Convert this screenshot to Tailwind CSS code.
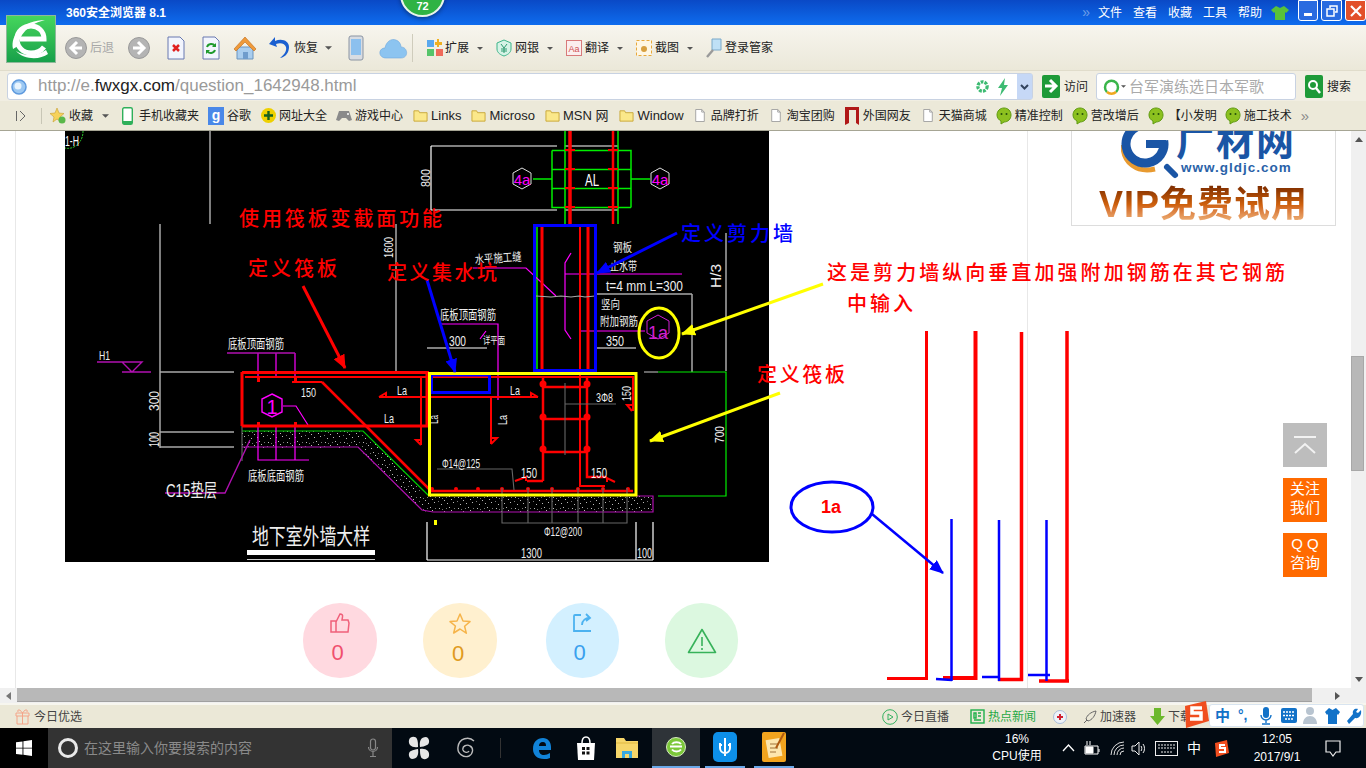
<!DOCTYPE html>
<html lang="zh">
<head>
<meta charset="utf-8">
<title>360安全浏览器</title>
<script src="https://cdn.jsdelivr.net/npm/@tailwindcss/browser@4"></script>
</head>
<body class="w-[1366px] h-[768px] overflow-hidden font-['Liberation_Sans','Noto_Sans_CJK_SC',sans-serif] text-xs">
<svg class="hidden">
  <symbol id="folder" viewBox="0 0 16 16"><path d="M1 3h5l1 2h8v9H1z" fill="#fbe88a" stroke="#c9a83a"/></symbol>
  <symbol id="doc" viewBox="0 0 14 16"><path d="M2 1h7l3 3v11H2z" fill="#fff" stroke="#9a9a9a"/><path d="M9 1v3h3" fill="none" stroke="#9a9a9a"/></symbol>
  <symbol id="bubble" viewBox="0 0 16 18"><path d="M8 1c4 0 7 3 7 7s-3 7-7 7l-3 2 0-3C3 13 1 11 1 8c0-4 3-7 7-7z" fill="#8cc11f" stroke="#5f9a10"/><circle cx="5.5" cy="7" r="1" fill="#24500a"/><circle cx="10.5" cy="7" r="1" fill="#24500a"/></symbol>
  <symbol id="caret" viewBox="0 0 8 4"><path d="M0 0h8L4 4z" fill="#555"/></symbol>
</svg>

<div class="relative flex flex-col h-[768px]">
  <!-- 标题栏 -->
  <div class="h-[25px] flex items-center bg-gradient-to-b from-[#0a49c6] to-[#0f6cee] text-white shrink-0">
    <span class="ml-[66px] font-bold">360安全浏览器 8.1</span>
    <span class="ml-auto text-[#6ea0e8] text-[14px] mr-[8px]">»</span>
    <div class="flex gap-[11px]">
      <span>文件</span><span>查看</span><span>收藏</span><span>工具</span><span>帮助</span>
    </div>
    <svg class="ml-[9px] w-[18px] h-[16px]" viewBox="0 0 18 16"><path d="M5 1l4 2 4-2 5 4-3 3-1-1v8H4V7L3 8 0 5z" fill="#58c23a"/></svg>
    <div class="ml-[9px] flex self-start gap-[3px]">
      <div class="w-[20px] h-[21px] rounded-b-[3px] border border-white bg-[#2a6be0] flex items-end justify-center pb-[4px]"><span class="w-[8px] h-[3px] bg-white"></span></div>
      <div class="w-[21px] h-[21px] rounded-b-[3px] border border-white bg-[#2a6be0] flex items-center justify-center"><svg class="w-[12px] h-[12px]" viewBox="0 0 12 12" fill="none" stroke="#fff" stroke-width="1.5"><path d="M4 3V1h7v6H9M1 4h7v7H1z"/></svg></div>
      <div class="w-[21px] h-[21px] rounded-b-[3px] border border-white bg-[#e2502a] flex items-center justify-center"><svg class="w-[12px] h-[12px]" viewBox="0 0 12 12" stroke="#fff" stroke-width="2.2"><path d="M1 1l10 10M11 1L1 11"/></svg></div>
    </div>
  </div>

  <!-- 工具栏 -->
  <div class="h-[45px] flex items-center pt-[1px] bg-gradient-to-b from-[#f7f5ee] to-[#ebe8d9] text-[#222] shrink-0">
    <svg class="ml-[65px] w-[22px] h-[22px]" viewBox="0 0 22 22"><circle cx="11" cy="11" r="10.5" fill="#b4b4b4" stroke="#999"/><path d="M12 5l-6 6 6 6M6 11h11" fill="none" stroke="#fff" stroke-width="3"/></svg>
    <span class="ml-[3px] text-[#a8a8a8]">后退</span>
    <svg class="ml-[14px] w-[22px] h-[22px]" viewBox="0 0 22 22"><circle cx="11" cy="11" r="10.5" fill="#b4b4b4" stroke="#999"/><path d="M10 5l6 6-6 6M16 11H5" fill="none" stroke="#fff" stroke-width="3"/></svg>
    <svg class="ml-[17px] w-[18px] h-[24px]" viewBox="0 0 18 24"><path d="M1 1h12l4 4v18H1z" fill="#f2f5fd" stroke="#6878b0"/><path d="M6 9l6 6M12 9l-6 6" stroke="#e02020" stroke-width="2.5"/></svg>
    <svg class="ml-[17px] w-[18px] h-[24px]" viewBox="0 0 18 24"><path d="M1 1h12l4 4v18H1z" fill="#f2f5fd" stroke="#6878b0"/><path d="M5 11a4.5 4.5 0 0 1 8-1M13 14a4.5 4.5 0 0 1-8 1" fill="none" stroke="#1f9a2c" stroke-width="2"/><path d="M14 7v4h-4zM4 18v-4h4z" fill="#1f9a2c"/></svg>
    <svg class="ml-[13px] w-[24px] h-[24px]" viewBox="0 0 24 24"><path d="M4 11v12h16V11z" fill="#a9cdee" stroke="#6a94be"/><path d="M1 13L12 1l11 12-2 2-9-9-9 9z" fill="#ef9a3a" stroke="#c06a18" stroke-width=".6"/><path d="M10 23v-7h5v7z" fill="#6f9ccc"/></svg>
    <svg class="ml-[11px] w-[22px] h-[24px]" viewBox="0 0 22 24"><path d="M7 1L1 8l8 3-1-3c5-2 9 0 10 3 1 4-2 8-6 11 6-1 9-6 9-11C21 5 14 2 7 5z" fill="#1a5fd0"/></svg>
    <span class="ml-[4px]">恢复</span>
    <svg class="ml-[7px] w-[7px] h-[4px]"><use href="#caret"/></svg>
    <svg class="ml-[16px] w-[16px] h-[26px]" viewBox="0 0 16 26"><rect x="1" y="1" width="14" height="24" rx="2" fill="#d8dce2" stroke="#8a94a2"/><rect x="3" y="4" width="10" height="16" fill="#8cc0ee"/></svg>
    <svg class="ml-[15px] w-[29px] h-[22px]" viewBox="0 0 29 22"><path d="M7 21c-8 0-8-10-1-10 1-6 6-10 11-8 3 1 5 4 5 7 7 0 8 11 0 11z" fill="#8cc4f0" stroke="#6ea8de" stroke-width=".6"/></svg>
    <span class="ml-[4px] w-px h-[28px] bg-[#cfccbc]"></span>
    <svg class="ml-[14px] w-[16px] h-[18px]" viewBox="0 0 16 18"><rect x="0" y="1" width="7" height="7" fill="#5aa8ee"/><rect x="0" y="10" width="7" height="7" fill="#56c46a"/><rect x="9" y="10" width="7" height="7" fill="#f06a5a"/><path d="M12 0v3h3v3h-3v2h-2V6H8V3h2V0z" fill="#f0b020"/></svg>
    <span class="ml-[2px]">扩展</span>
    <svg class="ml-[8px] w-[6px] h-[3px]"><use href="#caret"/></svg>
    <svg class="ml-[13px] w-[16px] h-[18px]" viewBox="0 0 16 18"><path d="M8 1l7 3v6c0 4-4 6-7 7-3-1-7-3-7-7V4z" fill="#d6f3e6" stroke="#3db58a"/><path d="M5 5l3 4 3-4M8 9v5M5 10h6M5 12h6" fill="none" stroke="#2f9a70"/></svg>
    <span class="ml-[3px]">网银</span>
    <svg class="ml-[8px] w-[6px] h-[3px]"><use href="#caret"/></svg>
    <svg class="ml-[13px] w-[16px] h-[18px]" viewBox="0 0 16 18"><rect x=".5" y="1.5" width="15" height="15" fill="#fbeeee" stroke="#d87a7a"/><text x="8" y="13" text-anchor="middle" font-size="9" fill="#d05050">Aa</text></svg>
    <span class="ml-[3px]">翻译</span>
    <svg class="ml-[8px] w-[6px] h-[3px]"><use href="#caret"/></svg>
    <svg class="ml-[13px] w-[16px] h-[18px]" viewBox="0 0 16 18"><rect x=".5" y="1.5" width="15" height="15" fill="#fff7e4" stroke="#e8a83a" stroke-dasharray="3 2"/><circle cx="8" cy="10" r="3" fill="#d8a040"/></svg>
    <span class="ml-[3px]">截图</span>
    <svg class="ml-[8px] w-[6px] h-[3px]"><use href="#caret"/></svg>
    <svg class="ml-[13px] w-[16px] h-[20px]" viewBox="0 0 16 20"><path d="M6 1h9v11H6z" fill="#bfe0f6" stroke="#7aa8c8"/><path d="M7 12l-6 7" stroke="#9a9a9a" stroke-width="2.4"/></svg>
    <span class="ml-[3px]">登录管家</span>
  </div>

  <!-- 地址栏 -->
  <div class="h-[31px] flex items-center pt-[1px] bg-[#f1eee2] border-t border-[#e0dccb] shrink-0">
    <div class="ml-[7px] w-[1026px] h-[27px] bg-white border border-[#c8d2e2] rounded-[3px] flex items-center">
      <svg class="ml-[3px] w-[16px] h-[16px]" viewBox="0 0 16 16"><circle cx="8" cy="8" r="7" fill="#9cc8f2" stroke="#5f9ade" stroke-width="1.5"/><circle cx="7" cy="7" r="3.5" fill="#e8f4fe"/></svg>
      <span class="ml-[11px] text-[17px] text-[#9a9a9a]">http://e.<span class="text-[#222]">fwxgx.com</span>/question_1642948.html</span>
      <svg class="ml-auto w-[13px] h-[13px]" viewBox="0 0 14 14"><circle cx="7" cy="7" r="5" fill="none" stroke="#3dbb72" stroke-width="3.5" stroke-dasharray="3 1.2"/></svg>
      <svg class="ml-[8px] w-[12px] h-[18px]" viewBox="0 0 12 18"><path d="M8 0L1 10h4l-2 8 8-11H7z" fill="#3dbb72"/></svg>
      <div class="ml-[8px] w-[15px] h-[25px] bg-[#c6d8f6] flex items-center justify-center"><svg class="w-[9px] h-[6px]" viewBox="0 0 9 6" fill="none" stroke="#33445e" stroke-width="2"><path d="M1 1l3.5 3.5L8 1"/></svg></div>
    </div>
    <svg class="ml-[9px] w-[18px] h-[23px]" viewBox="0 0 18 23"><rect width="18" height="23" rx="2" fill="#1e9a38"/><path d="M3 11h9M8 5l6 6-6 6" fill="none" stroke="#fff" stroke-width="3"/></svg>
    <span class="ml-[4px] text-[#222]">访问</span>
    <div class="ml-[8px] w-[200px] h-[27px] bg-white border border-[#c8d2e2] rounded-[3px] flex items-center">
      <svg class="ml-[6px] w-[18px] h-[18px]" viewBox="0 0 18 18" fill="none" stroke-width="2.5"><path d="M4 14A6.5 6.5 0 1 1 13 14" stroke="#3ab54a"/><path d="M4 14a6.5 6.5 0 0 0 9 0" stroke="#f0a81e"/></svg>
      <svg class="w-[5px] h-[3px]"><use href="#caret"/></svg>
      <span class="ml-[3px] text-[15px] text-[#aaa]">台军演练选日本军歌</span>
    </div>
    <svg class="ml-[9px] w-[18px] h-[23px]" viewBox="0 0 18 23"><rect width="18" height="23" rx="2" fill="#1e9a38"/><circle cx="8" cy="10" r="4" fill="none" stroke="#fff" stroke-width="2"/><path d="M11 13l4 5" stroke="#fff" stroke-width="2.4"/></svg>
    <span class="ml-[4px] text-[#222]">搜索</span>
  </div>

  <!-- 收藏栏 -->
  <div class="h-[29px] flex items-center bg-[#ece9d9] text-[#222] shrink-0">
    <svg class="ml-[15px] w-[12px] h-[12px]" viewBox="0 0 12 12" fill="none" stroke="#666"><path d="M1.5 1v10M5 1l5 5-5 5"/></svg>
    <span class="ml-[14px] w-px h-[16px] bg-[#c8c6b6]"></span>
    <svg class="ml-[8px] w-[16px] h-[18px]" viewBox="0 0 16 18"><path d="M7 1l2 5 5 .5-4 3.5 1 5-4-3-4 3 1-5-4-3.500 5-.5z" fill="#f6d25a" stroke="#c8a030" stroke-width=".6"/><circle cx="12" cy="13" r="3.500" fill="#5ab84a"/></svg>
    <span class="ml-[3px]">收藏</span>
    <svg class="ml-[9px] w-[7px] h-[4px]"><use href="#caret"/></svg>
    <svg class="ml-[13px] w-[11px] h-[18px]" viewBox="0 0 11 18"><rect x=".7" y=".7" width="9.600" height="16.600" rx="1.500" fill="#fff" stroke="#2fb05a" stroke-width="1.400"/><path d="M1 14h9v3H1z" fill="#2fb05a"/></svg>
    <span class="ml-[6px]">手机收藏夹</span>
    <div class="ml-[9px] w-[16px] h-[18px] bg-[#4a88e8] text-white text-[14px] font-bold flex items-center justify-center">g</div>
    <span class="ml-[3px]">谷歌</span>
    <svg class="ml-[10px] w-[15px] h-[17px]" viewBox="0 0 15 17"><circle cx="7.500" cy="8.500" r="7.500" fill="#eed000"/><path d="M7.500 4v9M3 8.500h9" stroke="#156020" stroke-width="2.400"/></svg>
    <span class="ml-[3px]">网址大全</span>
    <svg class="ml-[9px] w-[16px] h-[13px]" viewBox="0 0 16 13"><path d="M3 2h10l3 9-3 1-3-3H6l-3 3-3-1z" fill="#8a8a8a"/><circle cx="12" cy="5" r="1" fill="#fff"/></svg>
    <span class="ml-[3px]">游戏中心</span>
    <svg class="ml-[10px] w-[15px] h-[15px]"><use href="#folder"/></svg>
    <span class="ml-[3px] text-[13px]">Links</span>
    <svg class="ml-[10px] w-[15px] h-[15px]"><use href="#folder"/></svg>
    <span class="ml-[3px] text-[13px]">Microso</span>
    <svg class="ml-[10px] w-[15px] h-[15px]"><use href="#folder"/></svg>
    <span class="ml-[3px] text-[13px]">MSN 网</span>
    <svg class="ml-[11px] w-[15px] h-[15px]"><use href="#folder"/></svg>
    <span class="ml-[3px] text-[13px]">Window</span>
    <svg class="ml-[10px] w-[12px] h-[15px]"><use href="#doc"/></svg>
    <span class="ml-[5px]">品牌打折</span>
    <svg class="ml-[11px] w-[12px] h-[15px]"><use href="#doc"/></svg>
    <span class="ml-[5px]">淘宝团购</span>
    <svg class="ml-[10px] w-[14px] h-[18px]" viewBox="0 0 14 18"><path d="M0 0h14v18l-3-2V3H4v13l-4 2z" fill="#b01818"/></svg>
    <span class="ml-[4px]">外国网友</span>
    <svg class="ml-[11px] w-[12px] h-[15px]"><use href="#doc"/></svg>
    <span class="ml-[5px]">天猫商城</span>
    <svg class="ml-[9px] w-[16px] h-[18px]"><use href="#bubble"/></svg>
    <span class="ml-[3px]">精准控制</span>
    <svg class="ml-[9px] w-[16px] h-[18px]"><use href="#bubble"/></svg>
    <span class="ml-[3px]">营改增后</span>
    <svg class="ml-[9px] w-[16px] h-[18px]"><use href="#bubble"/></svg>
    <span class="ml-[5px]">【小发明</span>
    <svg class="ml-[8px] w-[16px] h-[18px]"><use href="#bubble"/></svg>
    <span class="ml-[3px]">施工技术</span>
    <span class="ml-[9px] text-[#8a8a8a] text-[15px]">»</span>
  </div>
  <div class="h-px bg-[#a6a594] shrink-0"></div>

  <!-- 页面内容 -->
  <div class="h-[557px] flex shrink-0">
    <div class="relative flex-1 bg-white overflow-hidden flex">
      <div class="w-[15px] shrink-0"></div>
      <div class="w-[1013px] border-x border-[#e8e8e8] shrink-0">
        <div class="ml-[49px] w-[704px] h-[431px] bg-black"></div>
        <div class="ml-[287px] mt-[41px] flex text-[22px]">
          <div class="w-[74px] h-[75px] rounded-full bg-[#ffd9e0] flex flex-col items-center pt-[10px] text-[#f0506e]">
            <svg class="w-[20px] h-[20px]" viewBox="0 0 20 20" fill="none" stroke="#f0607a" stroke-width="1.500"><path d="M1 8h5v11H1zM6 9l4-8c2 0 3 1 2.500 3L12 7h6l1 3-1 9H6"/></svg>
            <span class="mr-[5px] leading-[40px]">0</span>
          </div>
          <div class="ml-[46px] w-[74px] h-[75px] rounded-full bg-[#fff0cf] flex flex-col items-center pt-[10px] text-[#e09a20]">
            <svg class="w-[22px] h-[21px]" viewBox="0 0 22 21" fill="none" stroke="#f6b44a" stroke-width="1.500"><path d="M11 1l3 7 7 .6-5.400 4.600 1.700 7L11 16l-6.300 4 1.700-7L1 8.600 8 8z" stroke-linejoin="round"/></svg>
            <span class="mr-[4px] leading-[39px]">0</span>
          </div>
          <div class="ml-[49px] w-[73px] h-[75px] rounded-full bg-[#d3f0ff] flex flex-col items-center pt-[10px] text-[#39a0ee]">
            <svg class="w-[19px] h-[20px]" viewBox="0 0 19 20" fill="none" stroke="#4cb2f0" stroke-width="1.800"><path d="M8 2H2a1 1 0 0 0-1 1v15h17M9 12c0-5 4-7 7-7M13 1l4 4-4 3"/></svg>
            <span class="mr-[6px] leading-[40px]">0</span>
          </div>
          <div class="ml-[46px] w-[73px] h-[75px] rounded-full bg-[#dcf8e0] flex items-center justify-center">
            <svg class="w-[30px] h-[26px]" viewBox="0 0 30 26" fill="none" stroke="#37b25a" stroke-width="1.600"><path d="M15 1.500L1.500 24.500h27zM15 9v9" stroke-linejoin="round"/><path d="M15 20v2"/></svg>
          </div>
        </div>
      </div>
      <div class="flex-1 min-w-0">
        <div class="ml-[43px] w-[265px] h-[95px] border-x border-b border-[#dddddd] overflow-hidden">
          <div class="h-[54px] flex pl-[49px]">
            <svg class="w-[60px] h-[50px] shrink-0" viewBox="0 0 60 50" fill="none"><path d="M2 14c0 18 14 28 32 24" stroke="#e89a30" stroke-width="5"/><circle cx="24" cy="13" r="19" stroke="#1a55a5" stroke-width="9" stroke-dasharray="92 30" transform="rotate(-10 24 13)"/><path d="M25 13h20" stroke="#1a55a5" stroke-width="8"/><path d="M46 36l8 8" stroke="#1a55a5" stroke-width="6" stroke-linecap="round"/></svg>
            <div class="ml-[-5px] flex flex-col">
              <span class="mt-[-9px] h-[37px] text-[38px] leading-[41px] font-bold text-[#1a55a5] tracking-[2px] whitespace-nowrap">广材网</span>
              <span class="ml-[5px] text-[13.500px] leading-[18px] font-bold text-[#2a62a8] tracking-[1px]">www.gldjc.com</span>
            </div>
          </div>
          <div class="text-center text-[36px] leading-[40px] font-bold tracking-[1px] bg-gradient-to-b from-[#7a2a00] via-[#d0620e] to-[#f2c088] bg-clip-text text-transparent whitespace-nowrap">VIP免费试用</div>
        </div>
      </div>

      <!-- 图纸标注层 -->
      <svg class="absolute inset-0 pointer-events-none" width="1351" height="557" viewBox="0 131 1351 557">
        <defs>
          <marker id="hr" markerUnits="userSpaceOnUse" markerWidth="14" markerHeight="12" refX="13" refY="6" orient="auto"><path d="M0 0l14 6-14 6z" fill="#f00"/></marker>
          <marker id="hb" markerUnits="userSpaceOnUse" markerWidth="14" markerHeight="12" refX="13" refY="6" orient="auto"><path d="M0 0l14 6-14 6z" fill="#00f"/></marker>
          <marker id="hy" markerUnits="userSpaceOnUse" markerWidth="14" markerHeight="12" refX="13" refY="6" orient="auto"><path d="M0 0l14 6-14 6z" fill="#ff0"/></marker>
          <pattern id="con" width="19" height="11" patternUnits="userSpaceOnUse"><rect width="19" height="11" fill="#000"/><path d="M2 2h1v1H2zM7 5h1v1H7zM12 1h1v1h-1zM16 7h1v1h-1zM4 9h1v1H4zM10 8h1v1h-1zM14 4h1v1h-1z" fill="#bbb"/><path d="M5 3h1v1H5zM9 2h1v1H9zM1 6h1v1H1zM17 2h1v1h-1z" fill="#777"/></pattern>
        </defs>

        <!-- 灰色尺寸线 -->
        <g fill="none" stroke="#a8a8a8" stroke-width="1.500">
          <path d="M210 131v93M160 224v224M396 224v148M160 372h74M160 432h74M160 447h74M726 233v138M692 294v78M596 294h96"/>
        </g>
        <path d="M83 131a15 17 0 0 1-18 17" fill="none" stroke="#2fd02f" stroke-dasharray="2 1"/>
        <text x="65" y="146" fill="#fff" font-size="15" textLength="14" lengthAdjust="spacingAndGlyphs">1-H</text>
        <g fill="none" stroke="#fff" stroke-width="1.200">
          <path d="M431 146h126M431 210h126M431 146v64M565 146h53M565 210h53M427 348h60M596 348h40M427 522v38M636 522v38M653 522v38M427 560h226"/>
        </g>

        <!-- 上部柱 -->
        <g fill="none" stroke="#0e0" stroke-width="1.500">
          <path d="M552 150.500h79v57M552 150.500v57h79M552 169.500h79M552 188.500h79M565 131v93M618 131v93M533 179h19M631 179h19M537 226v144"/>
        </g>
        <path d="M570 131v93" stroke="#f00" stroke-width="3.500"/>
        <path d="M613 131v93" stroke="#f00" stroke-width="2.500"/>
        <g stroke="#f00" stroke-width="2"><path d="M565 150h10M565 169h10M565 188h10M565 207h10M608 150h10M608 169h10M608 188h10M608 207h10"/></g>
        <text x="592" y="186" fill="#fff" font-size="16" text-anchor="middle" textLength="14" lengthAdjust="spacingAndGlyphs">AL</text>
        <g fill="none" stroke="#ddd" stroke-width="1"><path d="M522 168l9 5v11l-9 5-9-5v-11zM660 168l9 5v11l-9 5-9-5v-11z"/></g>
        <text x="522" y="185" fill="#f0f" font-size="15" text-anchor="middle">4a</text>
        <text x="660" y="185" fill="#f0f" font-size="15" text-anchor="middle">4a</text>

        <!-- 混凝土垫层 -->
        <path d="M242 431h121l57 57v8h233v16H433l-11-1-64-63H242z" fill="url(#con)"/>
        <path d="M242 431h121l66 65" fill="none" stroke="#0c0" stroke-width="1.200"/>
        <path d="M242 447h116l64 63 11 2h220v-16h-17" fill="none" stroke="#b010b0" stroke-width="1.200"/>
        <path d="M242 372v89" stroke="#777"/>

        <!-- 品红引线 -->
        <g fill="none" stroke="#f0f" stroke-width="1.200">
          <path d="M473 268h53l30 28M571 253l-6 10v67l6 9M565 274h117M580 331h65M480 339l6-8M440 324h58v76M258 353v27M276 353v25M295 353v27M258 425v35h51M276 425v35M295 425v35M283 406h13l12 19"/>
          <path d="M272 394l10 5v13l-10 5-10-5v-13z" stroke-width="1.400"/>
        </g>
        <path d="M647 321l11-6 11 6v12l-11 6-11-6z" fill="none" stroke="#d020d0"/>
        <path d="M227 353h68M97 362h45l-10 10-10-10M122 372h29M165 493h60l25-53" fill="none" stroke="#b010b0" stroke-width="1.400"/>
        <text x="272" y="414" fill="#f0f" font-size="20" text-anchor="middle">1</text>
        <text x="658" y="339" fill="#d020d0" font-size="18" text-anchor="middle" textLength="20" lengthAdjust="spacingAndGlyphs">1a</text>

        <!-- 钢筋红线 -->
        <g fill="none" stroke="#f00" stroke-width="3">
          <path d="M242 372.500h187M242 426h187M242 372v54M427 372v55M542 226v143M588 226v143"/>
          <path d="M322 382l98 98 9 9" stroke-width="2.500"/>
          <path d="M543 377v104M587 377v100h20M543 387h44M543 419h44M543 452h44M543 481h-16" stroke-width="2.500"/>
          <path d="M430 491h203" stroke-width="2.500"/>
        </g>
        <path d="M245 377h184M322 382h-22" fill="none" stroke="#f00" stroke-width="2"/>
        <path d="M580 226v143M580 370v116h25" fill="none" stroke="#f00" stroke-width="2"/>
        <path d="M430 377h203v34M430 397h108M491 397v47M429 397h-50M421 377v68M292 382h10M515 481l11-4v4M615 482l-8-4v4M538 397l-7-4v4M379 397l7-4v4M632 411l-5-6h5M491 444l6-6h-6M421 445l-5-5h5" fill="none" stroke="#f00" stroke-width="2"/>
        <g fill="#f00">
          <circle cx="543" cy="384" r="3.500"/><circle cx="587" cy="384" r="3.500"/><circle cx="543" cy="417" r="3.500"/><circle cx="587" cy="417" r="3.500"/><circle cx="543" cy="449" r="3.500"/><circle cx="587" cy="449" r="3.500"/>
          <circle cx="432" cy="489" r="2"/><circle cx="456" cy="489" r="2"/><circle cx="478" cy="489" r="2"/><circle cx="502" cy="489" r="2"/><circle cx="528" cy="489" r="2"/><circle cx="552" cy="489" r="2"/><circle cx="578" cy="489" r="2"/><circle cx="603" cy="489" r="2"/><circle cx="628" cy="489" r="2"/>
          <rect x="257" y="378" width="3" height="4"/><rect x="294" y="378" width="3" height="4"/><rect x="257" y="422" width="3" height="4"/><rect x="294" y="422" width="3" height="4"/>
        </g>

        <!-- 灰线 -->
        <g fill="none" stroke="#666" stroke-width="1.100">
          <path d="M565 383v72M565 404h51M437 469h75l2 21M502 488v35h125v-35M528 488v35M552 488v35M578 488v35M603 488v35"/>
        </g>
        <path d="M536 296l15 1 10-1 10 1 8-1 6 1 10-1" fill="none" stroke="#aaa" stroke-width="1.200"/>
        <path d="M644 372h14" stroke="#888" stroke-width="1.500"/>
        <path d="M658 372h68v124h-68" fill="none" stroke="#0e0" stroke-width="1.200"/>

        <!-- CAD 白字 -->
        <g fill="#eee" font-size="14">
          <text x="228" y="348" textLength="56" lengthAdjust="spacingAndGlyphs" font-size="13">底板顶面钢筋</text>
          <text x="440" y="319" textLength="56" lengthAdjust="spacingAndGlyphs" font-size="13">底板顶面钢筋</text>
          <text x="248" y="480" textLength="56" lengthAdjust="spacingAndGlyphs" font-size="13">底板底面钢筋</text>
          <text x="166" y="497" textLength="51" lengthAdjust="spacingAndGlyphs" font-size="18">C15垫层</text>
          <text x="252" y="544" textLength="118" lengthAdjust="spacingAndGlyphs" font-size="22">地下室外墙大样</text>
          <text x="475" y="264" textLength="47" lengthAdjust="spacingAndGlyphs" font-size="12" transform="rotate(-4 475 264)">水平施工缝</text>
          <text x="613" y="252" textLength="19" lengthAdjust="spacingAndGlyphs" font-size="12">钢板</text>
          <text x="610" y="271" textLength="27" lengthAdjust="spacingAndGlyphs" font-size="12">止水带</text>
          <text x="606" y="291" textLength="77" lengthAdjust="spacingAndGlyphs" font-size="14">t=4 mm L=300</text>
          <text x="601" y="309" textLength="19" lengthAdjust="spacingAndGlyphs" font-size="12">竖向</text>
          <text x="600" y="326" textLength="38" lengthAdjust="spacingAndGlyphs" font-size="12">附加钢筋</text>
          <text x="449" y="346" textLength="17" lengthAdjust="spacingAndGlyphs" font-size="14">300</text>
          <text x="606" y="346" textLength="18" lengthAdjust="spacingAndGlyphs" font-size="14">350</text>
          <text x="505" y="344" textLength="22" lengthAdjust="spacingAndGlyphs" font-size="10" text-anchor="end">详平面</text>
          <text x="99" y="360" textLength="11" lengthAdjust="spacingAndGlyphs" font-size="13">H1</text>
          <text x="301" y="397" textLength="15" lengthAdjust="spacingAndGlyphs" font-size="13">150</text>
          <text x="397" y="395" textLength="10" lengthAdjust="spacingAndGlyphs" font-size="13">La</text>
          <text x="384" y="423" textLength="10" lengthAdjust="spacingAndGlyphs" font-size="13">La</text>
          <text x="510" y="395" textLength="10" lengthAdjust="spacingAndGlyphs" font-size="13">La</text>
          <text x="596" y="402" textLength="17" lengthAdjust="spacingAndGlyphs" font-size="13">3Φ8</text>
          <text x="521" y="478" textLength="16" lengthAdjust="spacingAndGlyphs" font-size="14">150</text>
          <text x="591" y="478" textLength="16" lengthAdjust="spacingAndGlyphs" font-size="14">150</text>
          <text x="442" y="468" textLength="38" lengthAdjust="spacingAndGlyphs" font-size="13">Φ14@125</text>
          <text x="544" y="536" textLength="38" lengthAdjust="spacingAndGlyphs" font-size="13">Φ12@200</text>
          <text x="521" y="558" textLength="21" lengthAdjust="spacingAndGlyphs" font-size="15">1300</text>
          <text x="637" y="558" textLength="15" lengthAdjust="spacingAndGlyphs" font-size="14">100</text>
          <text transform="translate(393 258) rotate(-90)" textLength="21" lengthAdjust="spacingAndGlyphs" font-size="12">1600</text>
          <text transform="translate(430 187) rotate(-90)" textLength="18" lengthAdjust="spacingAndGlyphs" font-size="12">800</text>
          <text transform="translate(721 288) rotate(-90)" textLength="24" lengthAdjust="spacingAndGlyphs" font-size="15">H/3</text>
          <text transform="translate(159 411) rotate(-90)" textLength="20" lengthAdjust="spacingAndGlyphs" font-size="14">300</text>
          <text transform="translate(159 447) rotate(-90)" textLength="15" lengthAdjust="spacingAndGlyphs" font-size="14">100</text>
          <text transform="translate(631 401) rotate(-90)" textLength="15" lengthAdjust="spacingAndGlyphs" font-size="13">150</text>
          <text transform="translate(507 425) rotate(-90)" textLength="10" lengthAdjust="spacingAndGlyphs" font-size="13">La</text>
          <text transform="translate(438 424) rotate(-90)" textLength="9" lengthAdjust="spacingAndGlyphs" font-size="13">La</text>
          <text transform="translate(724 443) rotate(-90)" textLength="17" lengthAdjust="spacingAndGlyphs" font-size="13">700</text>
        </g>
        <path d="M247 550h128v5H247z" fill="#fff"/>
        <path d="M247 559.500h128" stroke="#ccc"/>
        <rect x="434" y="520" width="3" height="5" fill="#ff0"/>

        <!-- 标注框和箭头 -->
        <rect x="534.500" y="225.500" width="61" height="145" fill="none" stroke="#00f" stroke-width="3"/>
        <rect x="431.500" y="375" width="58" height="17.500" fill="none" stroke="#00f" stroke-width="3"/>
        <rect x="429.500" y="373.500" width="206.500" height="121.500" fill="none" stroke="#ff0" stroke-width="3"/>
        <ellipse cx="659" cy="333" rx="20" ry="25" fill="none" stroke="#ff0" stroke-width="3"/>
        <path d="M303 286l42 82" stroke="#f00" stroke-width="3" marker-end="url(#hr)"/>
        <path d="M427 280l28 92" stroke="#00f" stroke-width="3" marker-end="url(#hb)"/>
        <path d="M677 233l-80 40" stroke="#00f" stroke-width="3" marker-end="url(#hb)"/>
        <path d="M823 284l-141 50" stroke="#ff0" stroke-width="3" marker-end="url(#hy)"/>
        <path d="M780 393l-130 48" stroke="#ff0" stroke-width="3" marker-end="url(#hy)"/>

        <g font-size="20" font-weight="500" fill="#f00">
          <text x="239" y="226" textLength="203">使用筏板变截面功能</text>
          <text x="248" y="276" textLength="89">定义筏板</text>
          <text x="387" y="280" textLength="110">定义集水坑</text>
          <text x="757" y="382" textLength="88">定义筏板</text>
          <text x="827" y="280" textLength="458">这是剪力墙纵向垂直加强附加钢筋在其它钢筋</text>
          <text x="847" y="311" textLength="66">中输入</text>
        </g>
        <text x="681" y="241" font-size="20" font-weight="500" fill="#00f" textLength="112">定义剪力墙</text>

        <!-- 右侧手绘钢筋 -->
        <g fill="none" stroke="#f00">
          <path d="M926.500 331v349M887 678.500h41" stroke-width="3"/>
          <path d="M975.500 331v349M943 678h34" stroke-width="4"/>
          <path d="M1021.500 332v349M998 679.500h25" stroke-width="3.500"/>
          <path d="M1067 331v351M1039 681h30" stroke-width="3.500"/>
        </g>
        <g fill="none" stroke="#00f" stroke-width="2.500">
          <path d="M951.500 519v162M936 679l16 1M999 520v161M982 677h17M1046.500 520v161M1028 675h22"/>
          <ellipse cx="832" cy="507" rx="41" ry="25" stroke-width="3"/>
        </g>
        <path d="M872 514l71 59" stroke="#00f" stroke-width="2.500" marker-end="url(#hb)"/>
        <text x="831" y="513" font-size="18" font-weight="700" fill="#f00" text-anchor="middle">1a</text>
      </svg>

      <!-- 悬浮按钮 -->
      <div class="absolute left-[1283px] top-[292px] w-[44px] flex flex-col gap-[11px] text-white text-[15px] leading-[19px] text-center">
        <div class="h-[44px] bg-[#bdbdbd] flex items-center justify-center"><svg class="w-[24px] h-[18px]" viewBox="0 0 24 18" fill="none" stroke="#f2f2f2" stroke-width="2"><path d="M1 1h22M2 17l10-9 10 9"/></svg></div>
        <div class="h-[44px] bg-[#ff6a00] pt-[1px]">关注<br>我们</div>
        <div class="h-[44px] bg-[#ff6a00] pt-[1px]">Q Q<br>咨询</div>
      </div>
    </div>
    <!-- 竖向滚动条 -->
    <div class="w-[15px] bg-[#f0f0f0] flex flex-col items-center relative">
      <div class="mt-[6px] w-0 h-0 border-x-[4px] border-x-transparent border-b-[5px] border-b-[#555]"></div>
      <div class="absolute left-0 top-[225px] w-[13px] h-[115px] bg-[#b8b8b8] border border-[#a8a8a8]"></div>
      <div class="mt-auto mb-[6px] w-0 h-0 border-x-[4px] border-x-transparent border-t-[5px] border-t-[#555]"></div>
    </div>
  </div>

  <!-- 横向滚动条 -->
  <div class="h-[15px] bg-[#f0f0f0] flex items-center shrink-0">
    <div class="ml-[6px] w-0 h-0 border-y-[4px] border-y-transparent border-r-[5px] border-r-[#777]"></div>
    <div class="ml-[6px] w-[1295px] h-[14px] self-start bg-[#b8b8b8] border-b border-[#a0a0a0]"></div>
    <div class="ml-[23px] w-0 h-0 border-y-[4px] border-y-transparent border-l-[5px] border-l-[#555]"></div>
  </div>

  <!-- 状态栏 -->
  <div class="h-[25px] flex items-center bg-[#ebe8d7] border-t-2 border-[#f7f6ef] text-[#444] shrink-0">
    <svg class="ml-[15px] w-[15px] h-[17px]" viewBox="0 0 15 17" fill="none" stroke="#f4a488"><path d="M1 5h13v3H1zM2 8v8h11V8M7.500 5v11M7.500 5C5 1 2 1 3 4M7.500 5c2.500-4 5.500-4 4.500-1"/></svg>
    <span class="ml-[4px]">今日优选</span>
    <svg class="ml-[800px] w-[16px] h-[16px]" viewBox="0 0 16 16" fill="none" stroke="#34b060"><circle cx="8" cy="8" r="7.300"/><path d="M6 5l5 3-5 3z"/></svg>
    <span class="ml-[3px]">今日直播</span>
    <svg class="ml-[21px] w-[15px] h-[15px]" viewBox="0 0 15 15" fill="none" stroke="#1fb04a" stroke-width="1.400"><rect x="1" y="1" width="13" height="13"/><path d="M4 4h2v5H4zM8 4h3M8 7h3M4 11h7"/></svg>
    <span class="ml-[3px] text-[#1fa844]">热点新闻</span>
    <svg class="ml-[17px] w-[14px] h-[14px]" viewBox="0 0 14 14"><circle cx="7" cy="7" r="6.500" fill="#eef2f8" stroke="#a8bcd8"/><path d="M7 4v6M4 7h6" stroke="#d02030" stroke-width="2"/></svg>
    <svg class="ml-[16px] w-[14px] h-[14px]" viewBox="0 0 14 14" fill="none" stroke="#666"><path d="M3 9c1-4 5-7 10-8-1 5-4 9-8 10zM1 13l3-3"/></svg>
    <span class="ml-[3px]">加速器</span>
    <svg class="ml-[14px] w-[15px] h-[18px]" viewBox="0 0 15 18"><path d="M4 0h7v8h4l-7.500 9L0 8h4z" fill="#6cb82c"/></svg>
    <span class="ml-[3px]">下载</span>
  </div>

  <!-- 任务栏 -->
  <div class="h-[40px] flex items-center bg-[#020a12] text-white shrink-0 relative">
    <div class="w-[48px] h-full bg-black flex items-center justify-center"><svg class="w-[16px] h-[16px]" viewBox="0 0 16 16" fill="#fff"><path d="M0 2.300l6.500-.9v6.300H0zM7.400 1.300L16 0v7.700H7.400zM0 8.500h6.500v6.300L0 13.900zM7.400 8.500H16V16l-8.600-1.200z"/></svg></div>
    <div class="w-[344px] h-full bg-[#333] flex items-center text-[14px] text-[#8a8a8a]">
      <span class="ml-[10px] w-[20px] h-[20px] rounded-full border-[3px] border-[#e8e8e8]"></span>
      <span class="ml-[6px]">在这里输入你要搜索的内容</span>
      <svg class="ml-auto mr-[14px] w-[10px] h-[20px]" viewBox="0 0 10 20" fill="none" stroke="#888" stroke-width="1.200"><rect x="2.500" y="1" width="5" height="11" rx="2.500"/><path d="M.5 9a4.500 4.500 0 0 0 9 0M5 14v4M2 18.500h6"/></svg>
    </div>
    <svg class="ml-[16px] w-[22px] h-[24px]" viewBox="0 0 22 24" fill="#e6e6e6"><path d="M10 11C4 12 0 9 1 4c1-4 7-4 8-1 1 2 1 5 1 8zM12 11c-1-6 1-10 6-10 4 1 4 7 1 8-2 1-5 2-7 2zM12 13c6-1 10 2 9 7-1 4-7 4-8 1-1-2-1-5-1-8zM10 13c1 6-1 10-6 10-4-1-4-7-1-8 2-1 5-2 7-2z"/></svg>
    <svg class="ml-[26px] w-[20px] h-[22px]" viewBox="0 0 20 22" fill="none" stroke="#bbb" stroke-width="1.400"><path d="M18 4C13-1 3 1 2 10c-1 7 6 11 11 9 4-2 5-8 1-10-3-2-8 0-7 4 1 3 5 3 6 1"/></svg>
    <span class="ml-[24px] w-px h-[20px] bg-[#333]"></span>
    <svg class="ml-[31px] w-[20px] h-[23px]" viewBox="0 0 20 23"><path d="M1 12C1 5 5 1 11 1c5 0 8 4 8 9v3H7c0 3 2 5 5 5 2 0 4-1 6-2v5c-2 1-4 1-6 1-7 0-11-4-11-10zM7 9h7c0-3-1-4-3-4-3 0-4 2-4 4z" fill="#1183d8"/></svg>
    <svg class="ml-[24px] w-[20px] h-[25px]" viewBox="0 0 20 25"><path d="M1 7h18l-1 17H2z" fill="#fff"/><path d="M6 7c0-8 8-8 8 0" fill="none" stroke="#fff" stroke-width="1.500"/><path d="M6 11h3v3H6zM10.500 11h3v3h-3zM6 15.500h3v3H6zM10.500 15.500h3v3h-3z" fill="#111"/></svg>
    <svg class="ml-[20px] w-[22px] h-[22px]" viewBox="0 0 22 22"><path d="M0 1h8l2 3h12v17H0z" fill="#f6d66a"/><path d="M0 6h22" stroke="#e0b840"/><path d="M6 21v-7h10v7h-3v-4H9v4z" fill="#38a8e0"/></svg>
    <div class="ml-[14px] w-[48px] h-full bg-[#2e3338] border-b-2 border-[#6aa8e8] flex items-center justify-center">
      <svg class="w-[20px] h-[20px]" viewBox="0 0 20 20"><circle cx="10" cy="10" r="9.500" fill="#7cc83a" stroke="#d6e8c0"/><path d="M4 9.500h12M6 12.500c2 2.500 7 2.500 9 0M6 7c2-2.500 7-2.500 9 0" fill="none" stroke="#fff" stroke-width="2"/></svg>
    </div>
    <div class="ml-[5px] w-[40px] h-full border-b-2 border-[#6aa8e8] flex items-center justify-center">
      <svg class="w-[24px] h-[30px]" viewBox="0 0 24 30"><rect width="24" height="30" rx="5" fill="#0d8fe8"/><path d="M12 6v18M6 13h3M15 13h3M7 11v5a3 3 0 0 0 10 0v-5" fill="none" stroke="#fff" stroke-width="2"/></svg>
    </div>
    <div class="ml-[9px] w-[40px] h-full border-b-2 border-[#6aa8e8] flex items-center justify-center">
      <svg class="w-[24px] h-[30px]" viewBox="0 0 24 30"><rect width="24" height="30" rx="2" fill="#f2a41e"/><rect x="5" y="7" width="14" height="18" fill="#fde6ae" transform="rotate(-10 12 16)"/><path d="M8 12h8M8 16h8M8 20h6" stroke="#a0723a"/><path d="M22 1L14 16" stroke="#b05a10" stroke-width="2"/></svg>
    </div>
    <div class="ml-[198px] w-[50px] text-center text-[12px] leading-[17px]">16%<br><span class="whitespace-nowrap">CPU使用</span></div>
    <svg class="ml-[20px] w-[13px] h-[8px]" viewBox="0 0 13 8" fill="none" stroke="#fff" stroke-width="1.300"><path d="M1 7l5.500-6L12 7"/></svg>
    <svg class="ml-[9px] w-[16px] h-[14px]" viewBox="0 0 16 14" fill="none" stroke="#fff"><path d="M1 5h13v8H1z"/><path d="M2 6h7v6H2z" fill="#fff"/><path d="M3 0v4M6 0v4M15 8v3"/></svg>
    <svg class="ml-[10px] w-[15px] h-[15px]" viewBox="0 0 15 15" fill="none" stroke="#ddd"><path d="M1 14a13 13 0 0 1 13-13M4 14A10 10 0 0 1 14 4M7 14a7 7 0 0 1 7-7M10 14a4 4 0 0 1 4-4"/></svg>
    <svg class="ml-[6px] w-[14px] h-[15px]" viewBox="0 0 14 15" fill="none" stroke="#eee"><path d="M1 5h3l4-4v13l-4-4H1zM10 5c1 1 1 4 0 5M12 3c2 2 2 7 0 9"/></svg>
    <svg class="ml-[10px] w-[23px] h-[15px]" viewBox="0 0 23 15" fill="none" stroke="#eee"><rect x=".5" y=".5" width="22" height="14"/><path d="M3 4h17M3 7h17M6 11h11" stroke-dasharray="2 1"/></svg>
    <span class="ml-[9px] text-[14px]">中</span>
    <svg class="ml-[13px] w-[15px] h-[17px]" viewBox="0 0 15 17"><path d="M1 3l12-3 2 13-13 4z" fill="#f04e1f"/><path d="M11 5H6v3h5v4H5" fill="none" stroke="#fff" stroke-width="2"/></svg>
    <div class="ml-[22px] w-[52px] text-center text-[12px] leading-[18px] whitespace-nowrap">12:05<br>2017/9/1</div>
    <svg class="ml-[22px] w-[16px] h-[17px]" viewBox="0 0 16 17" fill="none" stroke="#eee" stroke-width="1.200"><path d="M1 1h14v11h-4l-3 4-3-4H1z"/></svg>
  </div>

  <!-- 覆盖在窗口上的 logo、徽标和输入法条 -->
  <div class="absolute left-[6px] top-[15px] w-[50px] h-[48px] bg-gradient-to-b from-[#45d65c] to-[#16a04a] border border-[#8fb89a] flex items-center justify-center">
    <svg class="w-[42px] h-[42px]" viewBox="0 0 42 42" fill="none" stroke="#fff"><path d="M10 21h24c0-8-6-13-13-13S7 13 7 21s6 14 14 14c6 0 10-2 13-6" stroke-width="5"/><path d="M3 31C0 16 14 2 35 2 22 5 10 14 8 28" fill="#fff" stroke="none"/><path d="M38 36c-8 6-24 6-32-3 8 5 20 6 30-1z" fill="#fff" stroke="none"/></svg>
  </div>
  <div class="absolute left-[400px] top-[-28px] w-[45px] h-[45px] rounded-full bg-[#2fb344] border-2 border-[#e8f4ea] flex items-end justify-center pb-[1px] text-white text-[11px] font-bold shadow-[0_2px_4px_rgba(0,0,0,.35)]">72</div>
  <div class="absolute left-[1209px] top-[704px] w-[155px] h-[23px] bg-white rounded-[3px] border border-[#d8e4f0] flex items-center text-[#1272c8]">
    <span class="ml-[5px] text-[15px] font-bold">中</span>
    <span class="ml-[8px] text-[14px] font-bold">°,</span>
    <svg class="ml-[12px] w-[12px] h-[18px]" viewBox="0 0 12 18" fill="#1272c8"><rect x="3" y="0" width="6" height="11" rx="3"/><path d="M1 8a5 5 0 0 0 10 0M6 13v3M2 17h8" fill="none" stroke="#1272c8" stroke-width="1.400"/></svg>
    <svg class="ml-[9px] w-[16px] h-[15px]" viewBox="0 0 16 15"><rect width="16" height="15" rx="2" fill="#1272c8"/><path d="M2 4h12M2 7.500h12M4 11h8" stroke="#fff" stroke-dasharray="2 1" stroke-width="1.400"/></svg>
    <svg class="ml-[6px] w-[15px] h-[18px]" viewBox="0 0 15 18" fill="#b8c4d0"><circle cx="7" cy="4" r="4"/><path d="M0 17c0-5 3-8 7-8s7 3 7 8z"/></svg>
    <svg class="ml-[7px] w-[15px] h-[16px]" viewBox="0 0 15 16" fill="#1272c8"><path d="M4 0l3.500 2L11 0l4 4-2 3-1-1v10H3V6L2 7 0 4z"/></svg>
    <svg class="ml-[7px] w-[15px] h-[16px]" viewBox="0 0 15 16" fill="#1272c8"><path d="M14 2l-3 3-2-1 2-3c-3-1-6 1-5 5L0 13l2 3 6-6c4 1 7-3 6-8z"/></svg>
  </div>
  <svg class="absolute left-[1183px] top-[701px] w-[26px] h-[27px]" viewBox="0 0 26 27"><path d="M2 5l21-5 3 20-23 7z" fill="#f04e1f"/><path d="M19 7H9v5h9v6H7" fill="none" stroke="#fff" stroke-width="3.500"/></svg>
</div>
</body>
</html>
